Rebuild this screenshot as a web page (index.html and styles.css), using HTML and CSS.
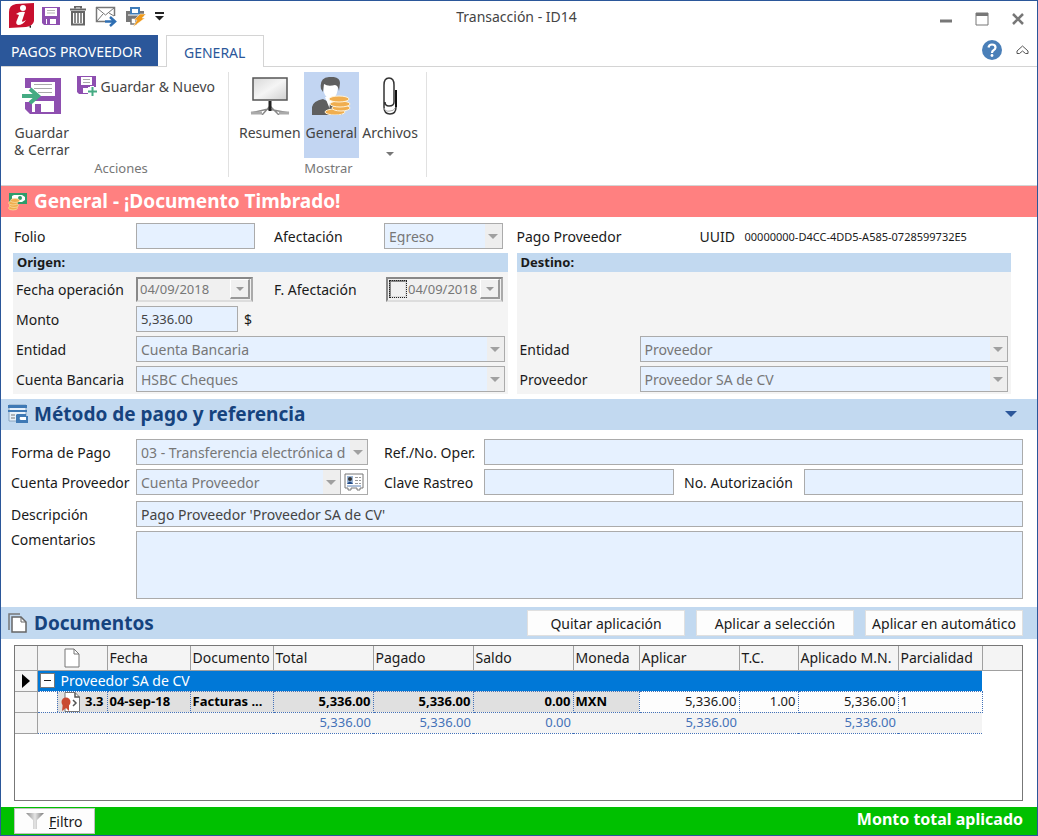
FILE: index.html
```html
<!DOCTYPE html>
<html lang="es">
<head>
  <meta charset="UTF-8" />
  <title>Transacción - ID14</title>
  <meta name="viewport" content="width=device-width, initial-scale=1" />
  <link rel="stylesheet" href="styles.css">
</head>
<body>

  <header class="titlebar">
    <div class="quick-access">
      <svg class="logo" width="27" height="27" viewBox="0 0 27 27">
        <path d="M8 1 L26 0 V18 Q25 23 18 24 L1 25 V9 Q1 2 8 1Z" fill="#c8102e"/>
        <circle cx="15" cy="5" r="3" fill="#fff"/>
        <path d="M8 11 Q12 8 17 9 L14 18 Q14 20 18 17 Q15 22 10 22 Q7 21 9 17 L11 12Z" fill="#fff"/>
        <path d="M21 24 L23 22 V25Z" fill="#222"/>
      </svg>
      <button class="icon-btn" aria-label="Guardar">
        <svg width="20" height="20" viewBox="0 0 20 20">
          <path d="M1 1H19V19H3L1 17Z" fill="#8e4fb0"/>
          <path d="M4 2H16V10H4Z" fill="#fff"/>
          <path d="M6 4.5H14M6 7H14" stroke="#b5b5b5"/>
          <path d="M5 13H15V18H5Z" fill="#fff"/>
          <path d="M6 13H9V18H6Z" fill="#8e4fb0"/>
        </svg>
      </button>
      <button class="icon-btn" aria-label="Eliminar">
        <svg width="18" height="20" viewBox="0 0 18 20" fill="none" stroke="#666">
          <path d="M1 3.5H17" stroke-width="2"/>
          <path d="M6 2.5V.5H12V2.5" stroke-width="2"/>
          <path d="M3 6V18.5H15V6Z" stroke-width="2"/>
          <path d="M6 6V17M9 6V17M12 6V17" stroke-width="1.5"/>
        </svg>
      </button>
      <button class="icon-btn" aria-label="Enviar correo">
        <svg width="22" height="21" viewBox="0 0 22 21" fill="none">
          <path d="M1 1.5H19.5V10M10 15.5H1.5V1" stroke="#777" stroke-width="1.5"/>
          <path d="M2 2L10.5 9L19 2M2 15L8 8M19 10L14 7" stroke="#777"/>
          <path d="M10 15.5H19M15 11L20 15.5L15 20" stroke="#2f6fb3" stroke-width="2.5"/>
        </svg>
      </button>
      <button class="icon-btn" aria-label="Imprimir rápido">
        <svg width="21" height="21" viewBox="0 0 21 21">
          <path d="M1 5H19V10L14 16H1Z" fill="#777"/>
          <path d="M6 2H14V8H6Z" fill="#fff" stroke="#3f7cb8" stroke-width="2"/>
          <path d="M3 9H14" stroke="#fff"/>
          <path d="M6 12H11V18H6Z" fill="#fff" stroke="#777" stroke-width="1.5"/>
          <path d="M15 8H21L17 12H20L8 21L12 14H9Z" fill="#f09a1a" stroke="#fff" stroke-width=".5"/>
        </svg>
      </button>
      <button class="icon-btn" aria-label="Personalizar barra">
        <svg width="11" height="9" viewBox="0 0 11 9"><path d="M1 1H10" stroke="#222" stroke-width="2"/><path d="M1 4H10L5.5 8.5Z" fill="#222"/></svg>
      </button>
    </div>
    <h1 class="window-title">Transacción - ID14</h1>
    <div class="window-buttons">
      <button class="icon-btn" aria-label="Minimizar">
        <svg width="14" height="14" viewBox="0 0 14 14"><path d="M1 9H13" stroke="#777" stroke-width="3"/></svg>
      </button>
      <button class="icon-btn" aria-label="Maximizar">
        <svg width="14" height="14" viewBox="0 0 14 14"><path d="M1 1H13V13H1Z" fill="none" stroke="#777"/><path d="M1 2.5H13" stroke="#777" stroke-width="3"/></svg>
      </button>
      <button class="icon-btn" aria-label="Cerrar">
        <svg width="14" height="14" viewBox="0 0 14 14"><path d="M2 2L12 12M12 2L2 12" stroke="#777" stroke-width="2.5"/></svg>
      </button>
    </div>
  </header>

  <nav class="tabs">
    <a class="tab tab-file" href="#pagos">PAGOS PROVEEDOR</a>
    <a class="tab tab-active" href="#general">GENERAL</a>
    <div class="tabs-right">
      <button class="icon-btn" aria-label="Ayuda">
        <svg width="20" height="20" viewBox="0 0 20 20">
          <circle cx="10" cy="10" r="10" fill="#4a7fb8"/>
          <path d="M6.5 7.5Q7 4.5 10 4.5Q13.5 4.5 13.5 7.5Q13.5 9 11.5 10.2Q10 11 10 13" fill="none" stroke="#fff" stroke-width="2.2"/>
          <circle cx="10" cy="15.5" r="1.4" fill="#fff"/>
        </svg>
      </button>
      <button class="icon-btn" aria-label="Contraer cinta">
        <svg width="13" height="10" viewBox="0 0 13 10"><path d="M6.5 1L1 6V8.5H3.5L6.5 6L9.5 8.500H12V6Z" fill="#fff" stroke="#555"/></svg>
      </button>
    </div>
  </nav>

  <section class="ribbon" id="general">
    <div class="ribbon-group group-actions">
      <div class="ribbon-items">
        <button class="ribbon-btn">
          <svg width="42" height="38" viewBox="0 0 42 38">
            <path d="M4 1H40V37H9L4 32V25H9L18 19L9 11H4Z" fill="#8e4fb0"/>
            <path d="M10 5H34V19H17L10 11Z" fill="#fff"/>
            <path d="M13 7.5H31M13 11.5H31M17 15.5H31" stroke="#aaa"/>
            <path d="M11 24H33V35H11Z" fill="#fff"/>
            <path d="M14 27H20V35H14Z" fill="#8e4fb0"/>
            <path d="M1 19H13" stroke="#fff" stroke-width="6"/>
            <path d="M1 19H15M9 12L17 19L9 26" fill="none" stroke="#45ab83" stroke-width="4"/>
          </svg>
          <span>Guardar<br>&amp; Cerrar</span>
        </button>
        <button class="ribbon-btn-small">
          <svg width="20" height="20" viewBox="0 0 20 20">
            <path d="M0 0H19V11H0ZM0 11H11V18H2L0 16Z" fill="#8e4fb0"/>
            <path d="M4 1H15V9H4Z" fill="#fff"/>
            <path d="M6 3.5H13M6 6.5H13" stroke="#aaa"/>
            <path d="M6 12H11V17H6Z" fill="#fff"/>
            <path d="M15 10V20M10 15H20" stroke="#fff" stroke-width="4"/>
            <path d="M15.5 11V20M11 15.5H20" stroke="#45ab83" stroke-width="2"/>
          </svg>
          <span>Guardar &amp; Nuevo</span>
        </button>
      </div>
      <div class="ribbon-caption">Acciones</div>
    </div>
    <div class="ribbon-group group-show">
      <div class="ribbon-items">
        <button class="ribbon-btn">
          <svg width="40" height="38" viewBox="0 0 40 38">
            <defs><linearGradient id="screen" x1="0" y1="0" x2="1" y2="1"><stop offset="0" stop-color="#d8d8d8"/><stop offset=".5" stop-color="#f5f5f5"/><stop offset="1" stop-color="#cfcfcf"/></linearGradient></defs>
            <path d="M3 1H37V23H3Z" fill="url(#screen)" stroke="#555" stroke-width="1.5"/>
            <path d="M1 36L18 32L39 36M12 38L20 29L29 38" fill="none" stroke="#888" stroke-width="1.5"/>
            <path d="M20 24V34" stroke="#222" stroke-width="3"/>
            <path d="M1 36H12M29 36H39" stroke="#aaa" stroke-width="3"/>
          </svg>
          <span>Resumen</span>
        </button>
        <button class="ribbon-btn selected">
          <svg width="40" height="38" viewBox="0 0 40 38">
            <path d="M1 38V30Q2 24 12 22L20 26L28 22Q32 26 31 38Z" fill="#5f5f5f"/>
            <path d="M14 20L20 35L25 20Z" fill="#fff"/>
            <path d="M19 26H22L23 35L20 38L18 34Z" fill="#5f5f5f"/>
            <path d="M12 7Q12 21 20 22Q27 21 27 7Z" fill="#fff"/>
            <path d="M10 12Q8 1 18 0Q29 -1 29 6L28 14Q27 8 24 8Q17 10 13 7L12 15Z" fill="#5f5f5f"/>
            <g fill="#f0ae50" stroke="#fff2d8">
              <ellipse cx="24" cy="35" rx="10" ry="3"/>
              <ellipse cx="30" cy="31" rx="9" ry="3"/>
              <ellipse cx="29" cy="27" rx="10" ry="3"/>
              <ellipse cx="28" cy="22" rx="10" ry="3"/>
            </g>
          </svg>
          <span>General</span>
        </button>
        <button class="ribbon-btn">
          <svg width="40" height="38" viewBox="0 0 40 38" fill="none" stroke="#333">
            <path d="M26 13V30Q26 37 20 37Q14 37 14 30V8Q14 1 19 1Q24 1 24 8V25Q24 29 19 29Q15 29 15 25" stroke-width="1.5"/>
            <path d="M26 13V30" stroke="#111" stroke-width="2"/>
            <path d="M14 31Q15 35 20 34Q24 34 25 31" stroke="#aaa"/>
          </svg>
          <span>Archivos</span>
          <svg class="menu-arrow" width="8" height="4" viewBox="0 0 8 4"><path d="M0 0H8L4 4Z" fill="#777"/></svg>
        </button>
      </div>
      <div class="ribbon-caption">Mostrar</div>
    </div>
  </section>

  <main>
    <h2 class="band band-alert">
      <svg width="20" height="20" viewBox="0 0 20 20">
        <path d="M1 2H19V13H1Z" fill="#2e9c6a"/>
        <path d="M4 5L6 4H14L17 6V9L14 11H9L4 8Z" fill="#fff"/>
        <circle cx="12" cy="7" r="2" fill="#2e9c6a"/>
        <g fill="#f0ae50" stroke="#fbe0a8" stroke-width=".7">
          <ellipse cx="5" cy="17" rx="4.5" ry="2"/><ellipse cx="6" cy="14.5" rx="4.5" ry="2"/><ellipse cx="5" cy="12" rx="4.5" ry="2"/><ellipse cx="7" cy="9.5" rx="4.5" ry="2"/>
        </g>
      </svg>
      General - ¡Documento Timbrado!
    </h2>

    <form class="general">
      <div class="row">
        <label class="label label-edge" for="folio">Folio</label>
        <input class="field field-short" id="folio" type="text">
        <label class="label label-second" for="afectacion">Afectación</label>
        <select class="field field-short" id="afectacion" disabled><option>Egreso</option></select>
      </div>
      <div class="row">
        <span class="label label-kind">Pago Proveedor</span>
        <span class="label-uuid">UUID</span>
        <span class="uuid">00000000-D4CC-4DD5-A585-0728599732E5</span>
      </div>

      <fieldset class="panel">
        <legend class="panel-title">Origen:</legend>
        <div class="row">
          <label class="label" for="fecha">Fecha operación</label>
          <span class="date">
            <input class="date-text" id="fecha" type="text" value="04/09/2018" disabled>
            <button class="date-btn" type="button" aria-label="Abrir calendario" disabled></button>
          </span>
          <label class="label label-second" for="fechaAfectacion">F. Afectación</label>
          <span class="date">
            <input class="date-check" type="checkbox" aria-label="Usar fecha de afectación">
            <input class="date-text" id="fechaAfectacion" type="text" value="04/09/2018" disabled>
            <button class="date-btn" type="button" aria-label="Abrir calendario" disabled></button>
          </span>
        </div>
        <div class="row">
          <label class="label" for="monto">Monto</label>
          <input class="field field-amount" id="monto" type="text" value="5,336.00">
          <span class="currency">$</span>
        </div>
        <div class="row">
          <label class="label" for="entidadOrigen">Entidad</label>
          <select class="field" id="entidadOrigen" disabled><option>Cuenta Bancaria</option></select>
        </div>
        <div class="row">
          <label class="label" for="cuentaBancaria">Cuenta Bancaria</label>
          <select class="field" id="cuentaBancaria" disabled><option>HSBC Cheques</option></select>
        </div>
      </fieldset>

      <fieldset class="panel panel-target">
        <legend class="panel-title">Destino:</legend>
        <div class="row">
          <label class="label" for="entidadDestino">Entidad</label>
          <select class="field" id="entidadDestino" disabled><option>Proveedor</option></select>
        </div>
        <div class="row">
          <label class="label" for="proveedor">Proveedor</label>
          <select class="field" id="proveedor" disabled><option>Proveedor SA de CV</option></select>
        </div>
      </fieldset>
    </form>

    <h2 class="band">
      <svg width="20" height="20" viewBox="0 0 20 20">
        <path d="M1 1H18V17H1Z" fill="#e8f1fb" stroke="#8aa5c0"/>
        <path d="M0 1H19V4H0ZM0 6H19V8H0Z" fill="#3f79b5"/>
        <path d="M3 11H7M3 14H7" stroke="#777"/>
        <path d="M9 10H18V12H20V19H8V11Z" fill="#3f79b5"/>
        <path d="M12 13H18V16H13Q11 16 12 13Z" fill="#fff"/>
      </svg>
      Método de pago y referencia
      <button class="icon-btn band-toggle" aria-label="Contraer sección">
        <svg width="12" height="6" viewBox="0 0 12 6"><path d="M0 0H12L6 6Z" fill="#2b579a"/></svg>
      </button>
    </h2>

    <form class="payment">
      <div class="row">
        <label class="label" for="formaPago">Forma de Pago</label>
        <select class="field field-method" id="formaPago" disabled><option>03 - Transferencia electrónica de fondos</option></select>
        <label class="label label-ref" for="referencia">Ref./No. Oper.</label>
        <input class="field" id="referencia" type="text">
      </div>
      <div class="row">
        <label class="label" for="cuentaProveedor">Cuenta Proveedor</label>
        <div class="field-method account">
          <select class="field" id="cuentaProveedor" disabled><option>Cuenta Proveedor</option></select>
          <button class="card-btn" type="button" aria-label="Ver cuenta">
            <svg width="20" height="18" viewBox="0 0 20 18">
              <path d="M1 1H19V15H16V17H13V15H7V17H4V15H1Z" fill="#fff" stroke="#777"/>
              <path d="M3 3H9V11H3Z" fill="#9bb6d6"/>
              <circle cx="6" cy="6" r="2" fill="#333"/>
              <path d="M3 11Q6 6 9 11Z" fill="#234a86"/>
              <path d="M11 4.5H17M11 7.5H17M11 10.5H17" stroke="#999" stroke-dasharray="3 1"/>
              <path d="M3 13H17" stroke="#5d82b5"/>
            </svg>
          </button>
        </div>
        <label class="label label-ref" for="rastreo">Clave Rastreo</label>
        <input class="field field-trace" id="rastreo" type="text">
        <label class="label label-auth" for="autorizacion">No. Autorización</label>
        <input class="field" id="autorizacion" type="text">
      </div>
      <div class="row row-description">
        <label class="label" for="descripcion">Descripción</label>
        <input class="field" id="descripcion" type="text" value="Pago Proveedor 'Proveedor SA de CV'">
      </div>
      <div class="row row-comments">
        <label class="label" for="comentarios">Comentarios</label>
        <textarea class="field comments" id="comentarios"></textarea>
      </div>
    </form>

    <div class="band band-documents">
      <svg width="20" height="20" viewBox="0 0 20 20">
        <path d="M1 17V1H12" fill="none" stroke="#777" stroke-width="1.5"/>
        <path d="M4 4H13L18 9V19H4Z" fill="#fff" stroke="#666" stroke-width="1.5"/>
        <path d="M13 4V9H18" fill="none" stroke="#666"/>
      </svg>
      <h2 class="band-text">Documentos</h2>
      <button class="band-btn">Quitar aplicación</button>
      <button class="band-btn">Aplicar a selección</button>
      <button class="band-btn">Aplicar en automático</button>
    </div>

    <div class="grid-box">
      <table class="documents">
        <colgroup>
          <col class="col-marker"><col class="col-type"><col class="col-date"><col class="col-doc">
          <col class="col-money"><col class="col-money"><col class="col-money"><col class="col-currency">
          <col class="col-money"><col class="col-rate"><col class="col-money"><col class="col-part"><col>
        </colgroup>
        <thead>
          <tr>
            <th></th>
            <th class="center">
              <svg width="16" height="20" viewBox="0 0 16 20"><path d="M1 1H10L15 6V19H1Z" fill="#fff" stroke="#777"/><path d="M10 1V6H15" fill="none" stroke="#777"/></svg>
            </th>
            <th>Fecha</th>
            <th>Documento</th>
            <th>Total</th>
            <th>Pagado</th>
            <th>Saldo</th>
            <th>Moneda</th>
            <th>Aplicar</th>
            <th>T.C.</th>
            <th>Aplicado M.N.</th>
            <th>Parcialidad</th>
            <th></th>
          </tr>
        </thead>
        <tbody>
          <tr>
            <td class="marker"><svg width="8" height="14" viewBox="0 0 8 14"><path d="M0 0L8 7L0 14Z" fill="#000"/></svg></td>
            <td class="group" colspan="11">
              <div class="group-row"><button class="expander" aria-label="Contraer grupo"></button>Proveedor SA de CV</div>
            </td>
            <td></td>
          </tr>
          <tr class="detail">
            <td class="marker"></td>
            <td class="type-cell">
              <div class="type">
                <svg width="20" height="20" viewBox="0 0 20 20">
                  <path d="M4 .5H14L18.5 5V19.5H4Z" fill="#fff" stroke="#777"/>
                  <path d="M14 .5V5H18.5M12 8L15 11L12 14" fill="none" stroke="#555" stroke-width="1.5"/>
                  <path d="M2 10L1 19L5 16L8 19L8 10Z" fill="#c94a32"/>
                  <circle cx="5" cy="10" r="4.5" fill="#c94a32"/>
                </svg>
                3.3
              </div>
            </td>
            <td class="locked">04-sep-18</td>
            <td class="locked">Facturas ...</td>
            <td class="locked num">5,336.00</td>
            <td class="locked num">5,336.00</td>
            <td class="locked num">0.00</td>
            <td class="locked">MXN</td>
            <td class="num">5,336.00</td>
            <td class="num">1.00</td>
            <td class="num">5,336.00</td>
            <td>1</td>
            <td class="blank"></td>
          </tr>
          <tr class="totals">
            <td class="marker"></td>
            <td></td>
            <td></td>
            <td></td>
            <td class="num">5,336.00</td>
            <td class="num">5,336.00</td>
            <td class="num">0.00</td>
            <td></td>
            <td class="num">5,336.00</td>
            <td></td>
            <td class="num">5,336.00</td>
            <td></td>
            <td class="blank"></td>
          </tr>
        </tbody>
      </table>
    </div>
  </main>

  <footer class="status">
    <button class="filter-btn">
      <svg width="18" height="18" viewBox="0 0 18 18">
        <defs><linearGradient id="funnel"><stop offset="0" stop-color="#8a8a8a"/><stop offset=".5" stop-color="#e5e5e5"/><stop offset="1" stop-color="#777"/></linearGradient></defs>
        <path d="M0 1H18L11 8V17H7V8Z" fill="url(#funnel)"/>
      </svg>
      <span><u>F</u>iltro</span>
    </button>
    <strong class="status-text">Monto total aplicado</strong>
  </footer>

</body>
</html>
```
FILE: styles.css
```css
* {
  box-sizing: border-box;
}

body {
  margin: 0;
  min-height: 100vh;
  display: flex;
  flex-direction: column;
  border: 1px solid #2b579a;
  background: #fff;
  color: #1a1a1a;
  font-family: 'Noto Sans', 'Open Sans', sans-serif;
  font-size: 14px;
  line-height: 17px;
}

button,
input,
select,
textarea {
  font: inherit;
  color: inherit;
}

svg {
  display: block;
  flex: none;
}

h1,
h2 {
  margin: 0;
}

.icon-btn {
  display: block;
  padding: 0;
  border: 0;
  background: none;
}

/* title bar */

.titlebar {
  display: grid;
  grid-template-columns: 1fr auto 1fr;
  align-items: center;
  height: 34px;
  padding: 0 12px 4px 7px;
}

.quick-access,
.window-buttons {
  display: flex;
  align-items: center;
  gap: 9px;
}

.quick-access {
  gap: 8px;
}

.quick-access .logo {
  margin-right: -2px;
}

.window-title {
  font-size: 14px;
  font-weight: 400;
  color: #444;
}

.window-buttons {
  justify-content: flex-end;
  gap: 22px;
  padding-top: 6px;
}

/* tabs */

.tabs {
  display: flex;
  height: 32px;
  border-bottom: 1px solid #d4d4d4;
}

.tab {
  padding: 8px 18px 8px 17px;
  text-decoration: none;
}

.tab-file {
  width: 157px;
  margin-right: 8px;
  padding: 8px 10px;
  background: #2b579a;
  color: #fff;
  white-space: nowrap;
}

.tab-active {
  height: 32px;
  border: 1px solid #d4d4d4;
  border-bottom: 0;
  background: #fff;
  color: #2b579a;
}

.tabs-right {
  display: flex;
  align-items: center;
  gap: 14px;
  margin-left: auto;
  padding: 0 8px 2px 0;
}

/* ribbon */

.ribbon {
  display: flex;
  height: 119px;
  padding-top: 5px;
  border-bottom: 1px solid #d4d4d4;
  color: #444;
}

.ribbon-group {
  display: flex;
  flex-direction: column;
  height: 105px;
  border-right: 1px solid #e1e1e1;
}

.group-actions {
  width: 228px;
  padding-left: 13px;
}

.group-show {
  padding: 0 8px 0 10px;
}

.ribbon-items {
  display: flex;
  align-items: flex-start;
  gap: 3px;
  height: 86px;
}

.group-actions .ribbon-items {
  gap: 7px;
}

.ribbon-btn {
  display: flex;
  flex-direction: column;
  align-items: center;
  gap: 9px;
  height: 86px;
  padding: 5px 0 0;
  border: 0;
  background: none;
}

.ribbon-btn.selected {
  padding: 5px 2px 0;
  background: #c2d5f2;
}

.menu-arrow {
  margin-top: 2px;
}

.ribbon-btn-small {
  display: flex;
  align-items: center;
  gap: 4px;
  padding: 4px 0;
  border: 0;
  background: none;
  white-space: nowrap;
}

.ribbon-caption {
  padding-top: 2px;
  color: #777;
  font-size: 13px;
  text-align: center;
}

/* section bands */

main {
  flex: 1;
  display: flex;
  flex-direction: column;
}

.band {
  display: flex;
  align-items: center;
  gap: 6px;
  height: 31px;
  padding: 0 14px 2px 7px;
  background: #c2d9f0;
  color: #16437e;
  font-size: 19px;
  font-weight: 700;
  line-height: 24px;
}

.band-alert {
  background: #ff8080;
  color: #fff;
}

.band-toggle {
  margin-left: auto;
  padding: 0 6px;
}

.band-documents {
  gap: 11px;
  height: 32px;
  padding-bottom: 0;
}

.band-text {
  margin: 0 auto 0 -5px;
  font-size: 19px;
}

.band-btn {
  width: 158px;
  height: 26px;
  padding: 0;
  border: 1px solid #e0e0e0;
  background: #fdfdfd;
  color: #1a1a1a;
  font-size: 14px;
  font-weight: 400;
  line-height: 17px;
  white-space: nowrap;
}

/* form fields */

.row {
  display: flex;
  align-items: center;
  height: 26px;
}

.label {
  flex: none;
  width: 120px;
  white-space: nowrap;
}

.field {
  flex: 1;
  width: 100%;
  min-width: 0;
  height: 26px;
  padding: 0 4px;
  border: 1px solid #ababab;
  border-radius: 0;
  background-color: #e6f1ff;
  color: #444;
}

select.field {
  appearance: none;
  padding-right: 22px;
  background-image:
    url("data:image/svg+xml,%3Csvg xmlns='http://www.w3.org/2000/svg' width='10' height='5'%3E%3Cpath d='M0 0H10L5 5Z' fill='%23a0a0a0'/%3E%3C/svg%3E"),
    linear-gradient(#eeeeee, #eeeeee);
  background-repeat: no-repeat;
  background-position: right 4px center, right center;
  background-size: 10px 5px, 17px 100%;
  color: #777;
  opacity: 1;
}

.general {
  display: grid;
  grid-template-columns: 1fr 1fr;
  gap: 4px 9px;
  padding: 6px 26px 5px 12px;
}

.label-edge {
  width: 123px;
  padding-left: 1px;
}

.field-short {
  flex: 0 0 119px;
}

.label-second {
  width: 129px;
  padding-left: 19px;
}

.panel .label-second {
  width: 133px;
  padding-left: 21px;
}

.label-kind {
  width: 183px;
}

.label-uuid {
  width: 45px;
}

.uuid {
  font-size: 11px;
}

.panel {
  display: flex;
  flex-direction: column;
  gap: 4px;
  min-width: 0;
  margin: 0;
  padding: 0 3px 2px;
  border: 0;
  background: #f4f4f4;
}

.panel-title {
  float: left;
  width: calc(100% + 6px);
  height: 19px;
  margin: 0 -3px;
  padding: 0 4px;
  background: #c2d9f0;
  font-size: 13px;
  font-weight: 700;
  line-height: 18px;
}

.panel-target .panel-title {
  margin-bottom: auto;
}

.date {
  display: flex;
  align-items: center;
  width: 117px;
  height: 25px;
  padding: 1px;
  border: 2px solid #888;
  border-right-color: #aaa;
  border-bottom-color: #ddd;
  background: #f0f0f0;
  font-size: 13px;
}

.date-text {
  flex: 1;
  width: 100%;
  min-width: 0;
  padding: 0 0 0 1px;
  border: 0;
  background: none;
  color: #777;
}

.date-check {
  appearance: none;
  flex: none;
  width: 18px;
  height: 18px;
  margin: 0;
  border: 2px solid #888;
  border-right-color: #ddd;
  border-bottom-color: #ddd;
  outline: 1px dotted #222;
  outline-offset: -1px;
}

.date-btn {
  flex: none;
  width: 20px;
  height: 20px;
  padding: 0;
  border: 1px solid #fff;
  border-right: 2px solid #999;
  border-bottom: 2px solid #999;
  background: #f0f0f0 url("data:image/svg+xml,%3Csvg xmlns='http://www.w3.org/2000/svg' width='8' height='4'%3E%3Cpath d='M0 0H8L4 4Z' fill='%23999'/%3E%3C/svg%3E") no-repeat center;
}

.field-amount {
  flex: 0 0 102px;
  font-size: 13px;
}

.currency {
  padding-left: 6px;
}

/* payment section */

.payment {
  display: flex;
  flex-direction: column;
  gap: 4px;
  padding: 9px 14px 8px 10px;
}

.payment .label {
  width: 125px;
}

.payment .field-method {
  flex: 0 0 232px;
}

.payment .label-ref {
  width: 116px;
  padding-left: 16px;
}

.payment .field-trace {
  flex: 0 0 190px;
}

.payment .label-auth {
  width: 130px;
  padding-left: 10px;
}

.account {
  display: flex;
}

.card-btn {
  width: 27px;
  height: 26px;
  padding: 0 3px;
  border: 1px solid #ababab;
  border-left: 0;
  background: #fff;
}

.row-description {
  margin-top: 2px;
}

.row-comments {
  align-items: flex-start;
  height: auto;
}

.comments {
  height: 68px;
  resize: none;
}

/* documents table */

.grid-box {
  flex: 1;
  margin: 6px 14px 6px 13px;
  border: 1px solid #777;
}

.documents {
  width: 100%;
  table-layout: fixed;
  border-collapse: collapse;
}

.col-marker {
  width: 22px;
}

.col-type {
  width: 70px;
}

.col-date,
.col-doc {
  width: 83px;
}

.col-part {
  width: 84px;
}

.col-money {
  width: 100px;
}

.col-currency {
  width: 66px;
}

.col-rate {
  width: 59px;
}

.documents th {
  height: 24px;
  padding: 0 2px;
  border-right: 1px solid #a0a0a0;
  border-bottom: 1px solid #a0a0a0;
  background: #f4f4f4;
  font-weight: 400;
  text-align: left;
  white-space: nowrap;
}

.documents th:last-child {
  border-right: 0;
}

.documents th.center svg {
  margin: 0 auto;
}

.documents td {
  height: 21px;
  padding: 0 2px;
  font-size: 13px;
  white-space: nowrap;
}

.documents .marker {
  padding-left: 7px;
  border-right: 1px solid #a0a0a0;
  border-bottom: 1px solid #a0a0a0;
  background: #f4f4f4;
}

.documents .group {
  background: #0078d7;
  color: #fff;
  font-size: 14px;
}

.group-row {
  display: flex;
  align-items: center;
  gap: 6px;
}

.expander {
  display: flex;
  align-items: center;
  justify-content: center;
  width: 15px;
  height: 15px;
  padding: 0;
  border: 1px solid #777;
  background: #fff;
}

.expander::before {
  content: "";
  width: 7px;
  height: 1px;
  background: #222;
}

.detail td {
  border: 1px dotted #4472b8;
  background: #fdfdfd;
}

.detail .marker {
  border-top: 0;
  border-left: 0;
}

.detail .locked,
.type {
  background: #e0e0e0;
  color: #000;
  font-weight: 700;
}

.detail .type-cell {
  padding: 0 0 0 19px;
  border-left: 0;
}

.type {
  display: flex;
  align-items: center;
  justify-content: space-between;
  height: 20px;
  padding: 0 3px;
  border-left: 1px dotted #4472b8;
}

.totals td {
  border-bottom: 1px dotted #4472b8;
  background: #f4f4f4;
  color: #4472b8;
}

.documents .num {
  text-align: right;
}

.documents .blank {
  border: 0;
  background: none;
}

/* status bar */

.status {
  display: flex;
  align-items: center;
  justify-content: space-between;
  height: 28px;
  padding: 0 14px 0 13px;
  background: #00c000;
  color: #fff;
}

.filter-btn {
  display: flex;
  align-items: center;
  gap: 5px;
  width: 81px;
  height: 26px;
  padding: 0 11px;
  border: 1px solid #c0c0c0;
  background: #fdfdfd;
  color: #1a1a1a;
}

.status-text {
  padding-bottom: 4px;
  font-size: 16px;
}
```
